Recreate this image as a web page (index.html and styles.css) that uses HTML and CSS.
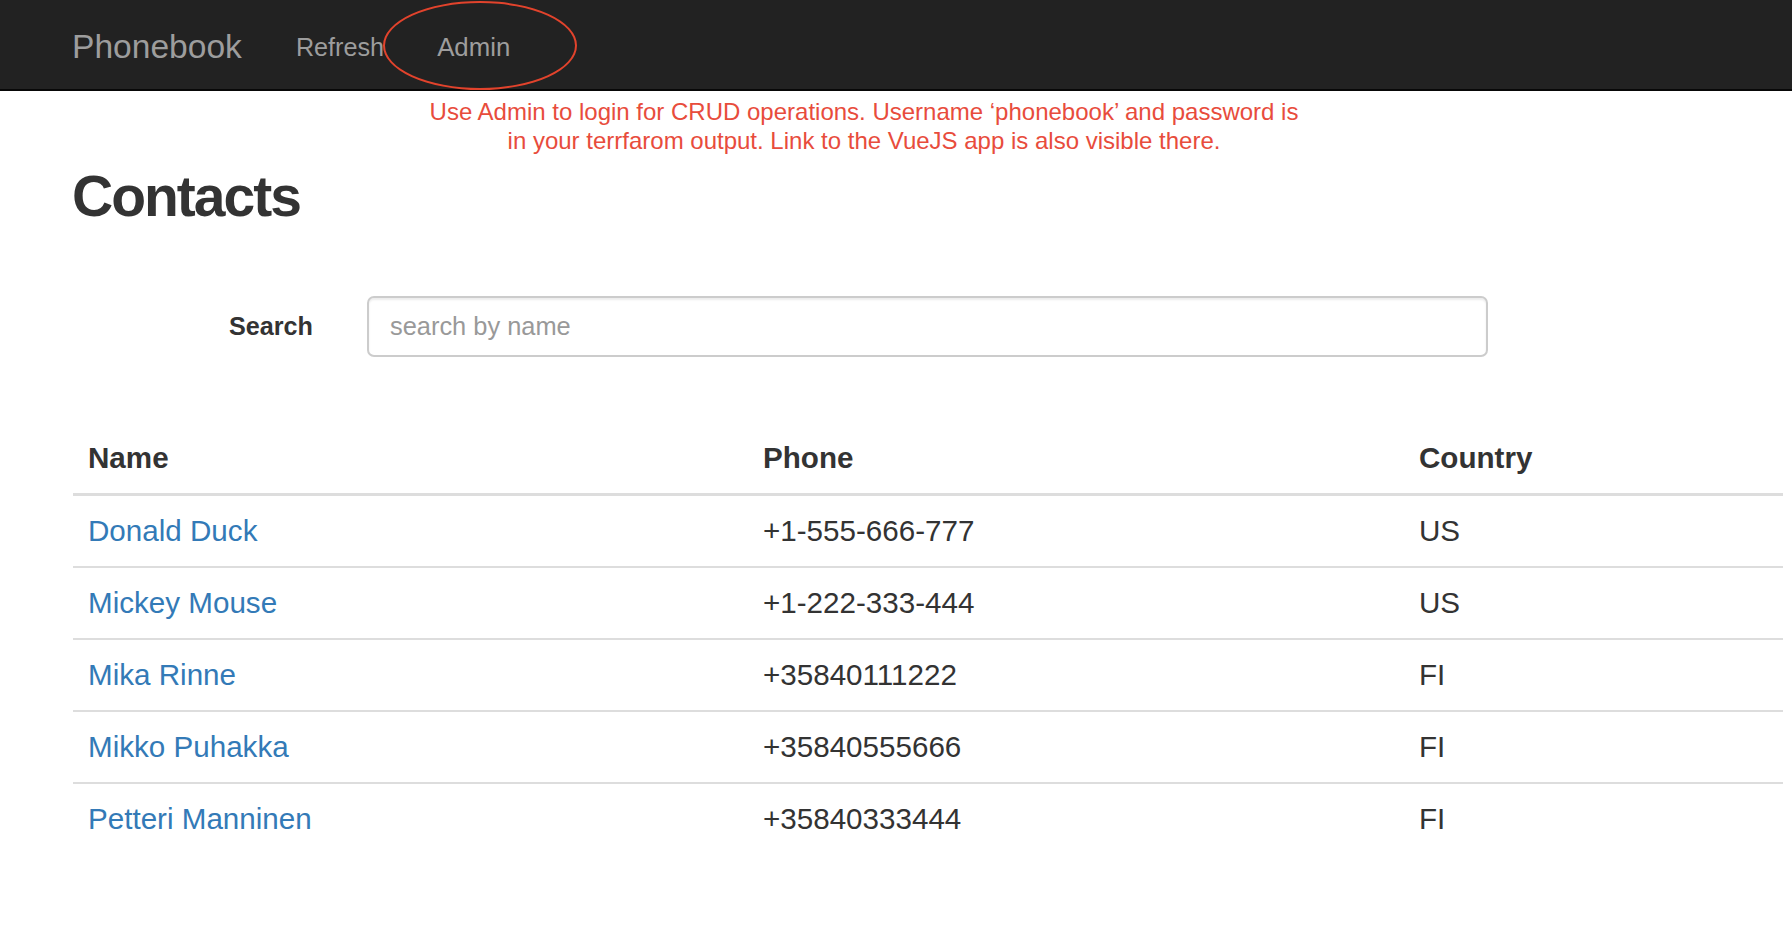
FILE: index.html
```html
<!DOCTYPE html>
<html lang="en">
<head>
<meta charset="utf-8">
<title>Phonebook</title>
<link rel="stylesheet" href="styles.css">
</head>
<body>
<header class="navbar">
  <a class="brand" href="#">Phonebook</a>
  <nav class="nav">
    <a class="nav-link" href="#">Refresh</a>
    <a class="nav-link nav-link-admin" href="#">Admin</a>
  </nav>
  <span class="callout"></span>
</header>
<main class="container">
  <p class="note">Use Admin to login for CRUD operations. Username ‘phonebook’ and password is<br>in your terrfarom output. Link to the VueJS app is also visible there.</p>
  <h1 class="title">Contacts</h1>
  <form class="search-row">
    <label class="search-label" for="search">Search</label>
    <div class="search-field">
      <input id="search" class="search-input" type="text" placeholder="search by name">
    </div>
  </form>
  <table class="contacts">
    <colgroup>
      <col class="col-name">
      <col class="col-phone">
      <col class="col-country">
    </colgroup>
    <thead>
      <tr><th>Name</th><th>Phone</th><th>Country</th></tr>
    </thead>
    <tbody>
      <tr><td><a href="#">Donald Duck</a></td><td>+1-555-666-777</td><td>US</td></tr>
      <tr><td><a href="#">Mickey Mouse</a></td><td>+1-222-333-444</td><td>US</td></tr>
      <tr><td><a href="#">Mika Rinne</a></td><td>+35840111222</td><td>FI</td></tr>
      <tr><td><a href="#">Mikko Puhakka</a></td><td>+35840555666</td><td>FI</td></tr>
      <tr><td><a href="#">Petteri Manninen</a></td><td>+35840333444</td><td>FI</td></tr>
    </tbody>
  </table>
</main>
</body>
</html>
```
FILE: styles.css
```css
* { box-sizing: border-box; }

html, body {
  margin: 0;
  padding: 0;
  background: #fff;
}

body {
  font-family: "Liberation Sans", Helvetica, Arial, sans-serif;
  color: #333;
  font-size: 29.6px;
}

a { text-decoration: none; }

.navbar {
  position: relative;
  height: 91px;
  padding: 4px 0 0 72px;
  background: #222;
  border-bottom: 2px solid #080808;
  display: flex;
  align-items: center;
}

.brand {
  font-size: 33.6px;
  line-height: 38px;
  color: #9d9d9d;
  padding-right: 27px;
}

.nav {
  display: flex;
  align-items: center;
}

.nav-link {
  font-size: 25.2px;
  line-height: 28px;
  color: #9d9d9d;
  padding: 0 27px;
}

.nav-link-admin {
  font-size: 25.8px;
  padding-left: 26px;
}

.callout {
  position: absolute;
  left: 383px;
  top: 1px;
  width: 194px;
  height: 89px;
  border: 2px solid #e2432c;
  border-radius: 50%;
}

.container {
  padding: 0 0 0 73px;
}

.note {
  width: 1000px;
  margin: 7px 0 0 291px;
  text-align: center;
  color: #e84c3c;
  font-size: 24px;
  line-height: 28.6px;
}

.title {
  margin: 10px 0 0 -1px;
  font-size: 57px;
  line-height: 62.7px;
  font-weight: 700;
  letter-spacing: -2px;
  color: #333;
}

.search-row {
  display: flex;
  align-items: center;
  margin-top: 68px;
}

.search-label {
  width: 267px;
  padding-right: 27px;
  text-align: right;
  font-weight: 700;
  font-size: 25.2px;
  color: #333;
}

.search-field {
  padding-left: 27px;
}

.search-input {
  display: block;
  width: 1121px;
  height: 61px;
  padding: 0 21px;
  font-family: inherit;
  font-size: 25.4px;
  color: #555;
  background: #fff;
  border: 2px solid #ccc;
  border-radius: 7px;
  box-shadow: inset 0 2px 2px rgba(0, 0, 0, 0.075);
  outline: none;
}

.search-input::placeholder {
  color: #999;
}

.contacts {
  margin-top: 66px;
  width: 1710px;
  table-layout: fixed;
  border-collapse: separate;
  border-spacing: 0;
}

.col-name { width: 675px; }
.col-phone { width: 656px; }
.col-country { width: 379px; }

.contacts th,
.contacts td {
  padding: 14px 14px 14px 15px;
  line-height: 42px;
  text-align: left;
  vertical-align: top;
}

.contacts th {
  font-weight: 700;
  border-bottom: 3px solid #ddd;
}

.contacts td {
  border-bottom: 2px solid #ddd;
}

.contacts tbody tr:last-child td {
  border-bottom: 0;
}

.contacts td a {
  color: #337ab7;
}
```
